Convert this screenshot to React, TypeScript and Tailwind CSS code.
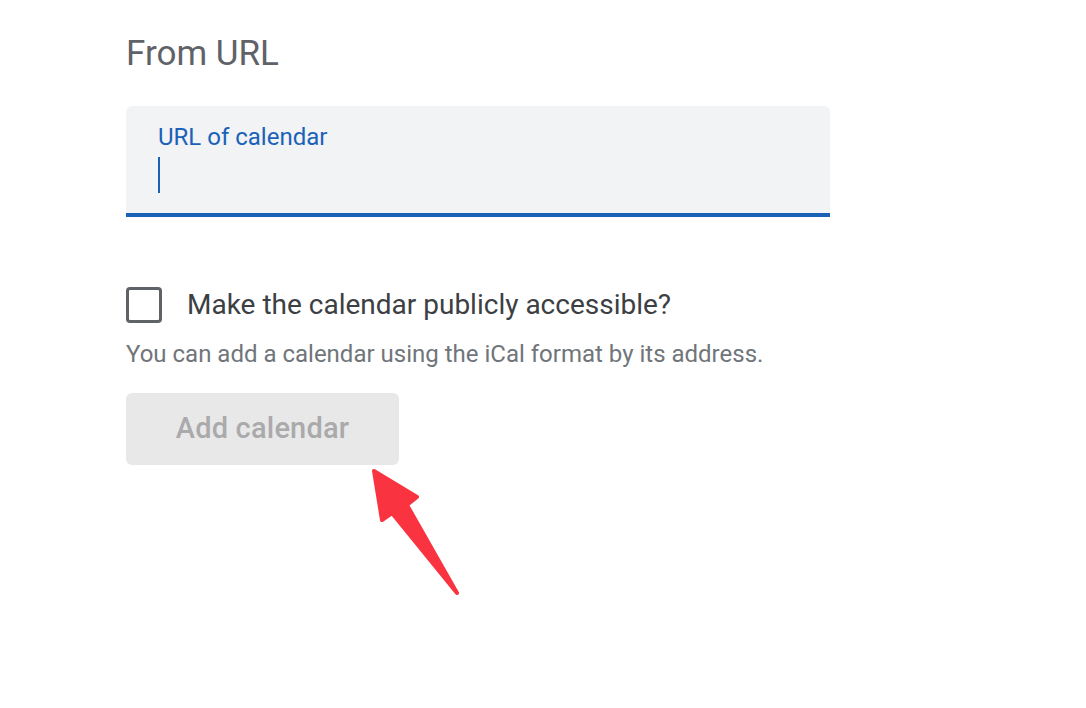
export default function App() {
  return (
    <main
      className="relative min-h-screen w-full bg-white"
      style={{ fontFamily: 'Roboto, "Open Sans", Arial, sans-serif' }}
    >
      <div className="flex w-[830px] flex-col pl-[126px] pt-[30px]">
        <h2 className="text-[35px] leading-[48px] text-[#5f6368]">From URL</h2>

        <div className="mt-[28px] flex h-[111px] flex-col rounded-t-[6px] border-b-[4px] border-[#1a62b8] bg-[#f1f3f4] px-[32px] pt-[15px]">
          <label className="text-[24px] leading-[32px] text-[#1a62b8]">URL of calendar</label>
          <div className="mt-[4px] h-[36px] w-[2px] bg-[#1a62b8]" />
        </div>

        <label className="mt-[70px] flex items-center gap-[25px]">
          <span className="h-[36px] w-[36px] rounded-[4px] border-[3px] border-[#5f6368]" />
          <span className="text-[28px] leading-[36px] text-[#3c4043]">
            Make the calendar publicly accessible?
          </span>
        </label>

        <p className="mt-[16px] text-[24px] leading-[30px] text-[#70757a]">
          You can add a calendar using the iCal format by its address.
        </p>

        <button
          disabled
          className="mt-[24px] flex h-[72px] w-[273px] items-center justify-center rounded-[6px] bg-[#e8e8e8] text-[29px] font-medium tracking-[0.2px] text-[#aaaaac]"
        >
          Add calendar
        </button>
      </div>

      <svg
        className="pointer-events-none absolute left-0 top-0"
        width="1086"
        height="708"
        viewBox="0 0 1086 708"
      >
        <path
          d="M374 471 L417 497 L407 505 L457 593 L392 513 L382 520 Z"
          fill="#f9333f"
          stroke="#f9333f"
          strokeWidth="4"
          strokeLinejoin="round"
        />
      </svg>
    </main>
  );
}
